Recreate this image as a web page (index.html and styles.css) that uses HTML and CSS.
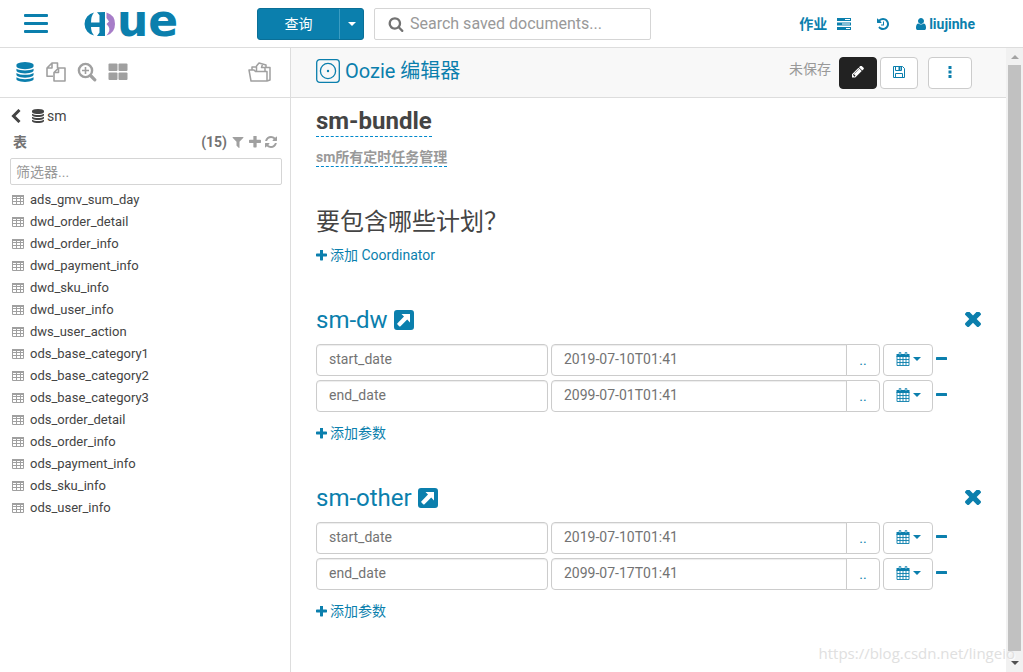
FILE: index.html
```
<!DOCTYPE html>
<html lang="zh-CN">
<head>
  <title>Hue - Oozie 编辑器</title>
  <meta charset="UTF-8">
  <meta name="viewport" content="width=device-width, initial-scale=1.0">
  <link rel="stylesheet" href="styles.css">
</head>
<body>
  <!-- icon set -->
  <svg class="icon-set" aria-hidden="true">
    <symbol id="i-database" viewBox="0 0 1792 1792"><path d="M896 768q237 0 443-43t325-127v170q0 69-103 128t-280 93.500-385 34.500-385-34.500-280-93.500-103-128v-170q119 84 325 127t443 43zm0 768q237 0 443-43t325-127v170q0 69-103 128t-280 93.500-385 34.500-385-34.500-280-93.500-103-128v-170q119 84 325 127t443 43zm0-384q237 0 443-43t325-127v170q0 69-103 128t-280 93.500-385 34.500-385-34.500-280-93.500-103-128v-170q119 84 325 127t443 43zm0-1152q208 0 385 34.500t280 93.500 103 128v128q0 69-103 128t-280 93.500-385 34.500-385-34.500-280-93.500-103-128v-128q0-69 103-128t280-93.500 385-34.500z"/></symbol>
    <symbol id="i-copy" viewBox="0 0 20 20"><path fill="none" stroke="currentColor" stroke-width="1.6" stroke-linejoin="round" d="M7 14.200H1V6l5-5h5.500v5M6 1v5H1M12.500 6H19v13H8v-8.500zM12.500 6v4.500H8"/></symbol>
    <symbol id="i-search" viewBox="0 0 1792 1792"><path d="M1216 832q0-185-131.500-316.500t-316.500-131.500-316.500 131.500-131.500 316.500 131.500 316.500 316.500 131.500 316.500-131.500 131.500-316.500zm512 832q0 52-38 90t-90 38q-54 0-90-38l-343-342q-179 124-399 124-143 0-273.500-55.500t-225-150-150-225-55.500-273.500 55.500-273.500 150-225 225-150 273.500-55.500 273.500 55.500 225 150 150 225 55.500 273.500q0 220-124 399l343 343q37 37 37 90z"/></symbol>
    <symbol id="i-zoom" viewBox="0 0 20 20"><circle cx="8.500" cy="8.500" r="6.600" fill="none" stroke="currentColor" stroke-width="2.400"/><path fill="none" stroke="currentColor" stroke-width="1.600" d="M8.500 5v7M5 8.500h7"/><path stroke="currentColor" stroke-width="3.200" stroke-linecap="round" d="M14 14l3.800 3.800"/></symbol>
    <symbol id="i-grid" viewBox="0 0 20 20"><rect x="0.500" y="1.500" width="9" height="7.500" rx="1"/><rect x="10.500" y="1.500" width="9" height="7.500" rx="1"/><rect x="0.500" y="10.500" width="9" height="7.500" rx="1"/><rect x="10.500" y="10.500" width="9" height="7.500" rx="1"/></symbol>
    <symbol id="i-folder" viewBox="0 0 24 20"><path fill="none" stroke="currentColor" stroke-width="1.500" stroke-linejoin="round" d="M1 8h5l1.500 1.500H19V19H3zM4 8V5h4.500M8.500 9.500V4L11 1l7 2v3M14.500 2.200l-1 3.300H17V9M18 5.500h4V18l-3 1"/></symbol>
    <symbol id="i-chevron" viewBox="0 0 12 14"><path fill="none" stroke="currentColor" stroke-width="3" d="M9.500 1L3.500 7l6 6"/></symbol>
    <symbol id="i-filter" viewBox="0 0 1792 1792"><path d="M1595 295q17 41-14 70l-493 493v742q0 42-39 59-13 5-25 5-27 0-45-19l-256-256q-19-19-19-45v-486l-493-493q-31-29-14-70 17-39 59-39h1280q42 0 59 39z"/></symbol>
    <symbol id="i-plus" viewBox="192 192 1408 1408"><path d="M1600 736v192q0 40-28 68t-68 28h-416v416q0 40-28 68t-68 28h-192q-40 0-68-28t-28-68v-416h-416q-40 0-68-28t-28-68v-192q0-40 28-68t68-28h416v-416q0-40 28-68t68-28h192q40 0 68 28t28 68v416h416q40 0 68 28t28 68z"/></symbol>
    <symbol id="i-refresh" viewBox="128 128 1536 1536"><path d="M1639 1056q0 5-1 7-64 268-268 434.500t-478 166.500q-146 0-282.500-55t-243.500-157l-129 129q-19 19-45 19t-45-19-19-45v-448q0-26 19-45t45-19h448q26 0 45 19t19 45-19 45l-137 137q71 66 161 102t187 36q134 0 250-65t186-179q11-17 53-117 8-23 30-23h192q13 0 22.500 9.500t9.500 22.500zm25-800v448q0 26-19 45t-45 19h-448q-26 0-45-19t-19-45 19-45l138-138q-148-137-349-137-134 0-250 65t-186 179q-11 17-53 117-8 23-30 23h-199q-13 0-22.500-9.500t-9.500-22.500v-7q65-268 270-434.500t480-166.500q146 0 284 55.500t245 156.500l130-129q19-19 45-19t45 19 19 45z"/></symbol>
    <symbol id="i-table" viewBox="0 0 12 10"><path fill="none" stroke="currentColor" d="M.5.5h11v9H.5zM0 3.500h12M0 6.500h12M4.500 0v10M8.500 0v10"/><path d="M0 0h12v2H0z"/></symbol>
    <symbol id="i-tasks" viewBox="0 0 14 12"><path fill-rule="evenodd" d="M0 0h14v3H0zM8 1v1h5V1zM0 4.500h14v3H0zM5 5.500v1h8v-1zM0 9h14v3H0zM9 10v1h4v-1z"/></symbol>
    <symbol id="i-history" viewBox="128 128 1536 1536"><path d="M1664 896q0 156-61 298t-164 245-245 164-298 61q-172 0-327-72.500t-264-204.500q-7-10-6.500-22.500t8.500-20.500l137-138q10-9 25-9 16 2 23 12 73 95 179 147t225 52q104 0 198.500-40.500t163.500-109.500 109.500-163.500 40.500-198.500-40.500-198.500-109.500-163.500-163.500-109.500-198.500-40.500q-98 0-188 35.500t-160 101.500l137 138q31 30 14 69-17 40-59 40h-448q-26 0-45-19t-19-45v-448q0-42 40-59 39-17 69 14l130 129q107-101 244.500-156.500t284.500-55.500q156 0 298 61t245 164 164 245 61 298zm-640-288v448q0 14-9 23t-23 9h-320q-14 0-23-9t-9-23v-64q0-14 9-23t23-9h224v-352q0-14 9-23t23-9h64q14 0 23 9t9 23z"/></symbol>
    <symbol id="i-user" viewBox="192 128 1408 1536"><path d="M1536 1399q0 109-62.500 187t-150.500 78h-854q-88 0-150.500-78t-62.500-187q0-85 8.500-160.500t31.500-152 58.500-131 94-89 134.500-34.500q131 128 313 128t313-128q76 0 134.500 34.500t94 89 58.500 131 31.500 152 8.500 160.500zm-256-887q0 159-112.500 271.500t-271.500 112.500-271.500-112.500-112.500-271.500 112.500-271.500 271.500-112.500 271.500 112.500 112.500 271.500z"/></symbol>
    <symbol id="i-oozie" viewBox="0 0 24 24"><g fill="none" stroke="currentColor" stroke-width="1.300"><rect x="0.700" y="0.700" width="22.600" height="22.600" rx="3"/><circle cx="12" cy="12" r="7.600"/></g><circle cx="12" cy="12" r="1.200"/></symbol>
    <symbol id="i-pencil" viewBox="128 256 1536 1408"><path d="M491 1536l91-91-235-235-91 91v107h128v128h107zm523-928q0-22-22-22-10 0-17 7l-542 542q-7 7-7 17 0 22 22 22 10 0 17-7l542-542q7-7 7-17zm-54-192l416 416-832 832h-416v-416zm683 96q0 53-37 90l-166 166-416-416 166-165q36-38 90-38 53 0 91 38l235 234q37 39 37 91z"/></symbol>
    <symbol id="i-save" viewBox="0 0 12 12"><path fill="none" stroke="currentColor" d="M.5.5h9l2 2v9H.5zM2.500 11.500v-4h7v4M2.500.5v4h6v-4"/><path d="M5.500 1h2v3h-2z"/></symbol>
    <symbol id="i-dots" viewBox="0 0 4 12"><path d="M.5 0h3v3h-3zM.5 4.500h3v3h-3zM.5 9h3v3h-3z"/></symbol>
    <symbol id="i-open" viewBox="0 0 20 20"><path fill-rule="evenodd" d="M3 0h14a3 3 0 0 1 3 3v14a3 3 0 0 1-3 3H3a3 3 0 0 1-3-3V3a3 3 0 0 1 3-3zM7.500 4l2.500 2.500-6.500 6.700q-.7.600 0 1.300l1.700 1.700q.6.700 1.300 0l6.700-6.600 2.800 2.900V4z"/></symbol>
    <symbol id="i-times" viewBox="302 444 1188 1188"><path transform="translate(0 109)" d="M1490 1223q0 40-28 68l-136 136q-28 28-68 28t-68-28l-294-294-294 294q-28 28-68 28t-68-28l-136-136q-28-28-28-68t28-68l294-294-294-294q-28-28-28-68t28-68l136-136q28-28 68-28t68 28l294 294 294-294q28-28 68-28t68 28l136 136q28 28 28 68t-28 68l-294 294 294 294q28 28 28 68z"/></symbol>
    <symbol id="i-calendar" viewBox="0 0 13 14"><path fill="none" stroke="currentColor" stroke-width=".9" d="M.5 4v9.500h12V4M.5 7.500h12M.5 10.500h12M3.500 4v9.500M6.500 4v9.500M9.500 4v9.500"/><path d="M0 2h13v3H0z"/><path fill="#fff" stroke="currentColor" stroke-width=".8" d="M2.700.5h1.600V3H2.700zM8.700.5h1.600V3H8.700z"/></symbol>
    <symbol id="i-minus" viewBox="0 0 11 3"><rect width="11" height="3" rx=".5"/></symbol>
    <symbol id="i-caret" viewBox="0 0 8 4"><path d="M0 0h8L4 4z"/></symbol>
  </svg>

  <header class="navbar">
    <button type="button" class="hamburger" aria-label="菜单"><span></span><span></span><span></span></button>
    <a href="#" class="logo" aria-label="Hue">
      <svg width="33" height="24" viewBox="0 0 33 24">
        <path fill="#0b7fad" d="M10 .6A11.600 11.600 0 0 0 10 23.400Q7 20 7 15H15.500v5.500L13 24h8V0l-8 .3 2.500 3V10.500H7Q7 4 10 .6z"/>
        <path fill="#a77dc8" d="M22.500.5Q31 3 31 12t-8.500 11.500Q27 18 24.500 14.500L22.500 12l2.500-2.500-2.500-3.500z"/>
      </svg>
      <span class="logo-text">ue</span>
    </a>
    <div class="query">
      <button type="button" class="query-main">查询</button>
      <button type="button" class="query-toggle" aria-label="更多"><svg class="caret"><use href="#i-caret"/></svg></button>
    </div>
    <div class="search">
      <svg class="icon-16"><use href="#i-search"/></svg>
      <input type="search" placeholder="Search saved documents..." aria-label="Search saved documents">
    </div>
    <nav class="nav-links">
      <a href="#">作业 <svg class="tasks"><use href="#i-tasks"/></svg></a>
      <a href="#" aria-label="历史"><svg class="icon-12"><use href="#i-history"/></svg></a>
      <a href="#"><svg class="icon-12"><use href="#i-user"/></svg>liujinhe</a>
    </nav>
  </header>

  <div class="page">
    <aside class="sidebar">
      <div class="assist-bar">
        <button type="button" class="active" aria-label="SQL"><svg class="icon-20"><use href="#i-database"/></svg></button>
        <button type="button" aria-label="文档"><svg class="icon-20"><use href="#i-copy"/></svg></button>
        <button type="button" aria-label="搜索"><svg class="icon-20"><use href="#i-zoom"/></svg></button>
        <button type="button" aria-label="应用"><svg class="icon-20"><use href="#i-grid"/></svg></button>
        <button type="button" class="folder" aria-label="文件"><svg class="icon-24"><use href="#i-folder"/></svg></button>
      </div>
      <div class="assist">
        <a href="#" class="breadcrumb"><svg class="chevron"><use href="#i-chevron"/></svg><svg class="icon-14"><use href="#i-database"/></svg>sm</a>
        <div class="assist-header">
          <h4>表</h4>
          <span>(15)</span>
          <button type="button" aria-label="筛选"><svg class="icon-14"><use href="#i-filter"/></svg></button>
          <button type="button" aria-label="新建"><svg class="icon-12"><use href="#i-plus"/></svg></button>
          <button type="button" aria-label="刷新"><svg class="icon-12"><use href="#i-refresh"/></svg></button>
        </div>
        <input type="text" class="filter" placeholder="筛选器..." aria-label="筛选器">
        <ul class="tables">
          <li><a href="#"><svg><use href="#i-table"/></svg>ads_gmv_sum_day</a></li>
          <li><a href="#"><svg><use href="#i-table"/></svg>dwd_order_detail</a></li>
          <li><a href="#"><svg><use href="#i-table"/></svg>dwd_order_info</a></li>
          <li><a href="#"><svg><use href="#i-table"/></svg>dwd_payment_info</a></li>
          <li><a href="#"><svg><use href="#i-table"/></svg>dwd_sku_info</a></li>
          <li><a href="#"><svg><use href="#i-table"/></svg>dwd_user_info</a></li>
          <li><a href="#"><svg><use href="#i-table"/></svg>dws_user_action</a></li>
          <li><a href="#"><svg><use href="#i-table"/></svg>ods_base_category1</a></li>
          <li><a href="#"><svg><use href="#i-table"/></svg>ods_base_category2</a></li>
          <li><a href="#"><svg><use href="#i-table"/></svg>ods_base_category3</a></li>
          <li><a href="#"><svg><use href="#i-table"/></svg>ods_order_detail</a></li>
          <li><a href="#"><svg><use href="#i-table"/></svg>ods_order_info</a></li>
          <li><a href="#"><svg><use href="#i-table"/></svg>ods_payment_info</a></li>
          <li><a href="#"><svg><use href="#i-table"/></svg>ods_sku_info</a></li>
          <li><a href="#"><svg><use href="#i-table"/></svg>ods_user_info</a></li>
        </ul>
      </div>
    </aside>

    <main class="editor">
      <div class="editor-bar">
        <a href="#" class="app-name"><svg class="icon-24"><use href="#i-oozie"/></svg>Oozie 编辑器</a>
        <span class="unsaved">未保存</span>
        <button type="button" class="btn btn-dark" aria-label="编辑"><svg class="icon-12"><use href="#i-pencil"/></svg></button>
        <button type="button" class="btn" aria-label="保存"><svg class="icon-12"><use href="#i-save"/></svg></button>
        <button type="button" class="btn btn-more" aria-label="更多操作"><svg class="dots"><use href="#i-dots"/></svg></button>
      </div>

      <div class="content">
        <h1><span class="editable">sm-bundle</span></h1>
        <p class="description"><span class="editable">sm所有定时任务管理</span></p>

        <h2>要包含哪些计划？</h2>
        <a href="#" class="add"><svg><use href="#i-plus"/></svg>添加 Coordinator</a>

        <section class="coordinator">
          <div class="coordinator-title">
            <h3>sm-dw</h3>
            <a href="#" aria-label="打开 sm-dw"><svg class="icon-20"><use href="#i-open"/></svg></a>
            <button type="button" class="remove" aria-label="移除"><svg class="icon-16"><use href="#i-times"/></svg></button>
          </div>
          <div class="param">
            <input type="text" class="param-name" value="start_date" aria-label="参数名">
            <div class="param-value">
              <input type="text" value="2019-07-10T01:41" aria-label="start_date">
              <button type="button">..</button>
            </div>
            <button type="button" class="calendar" aria-label="日期"><svg class="icon-14"><use href="#i-calendar"/></svg><svg class="caret"><use href="#i-caret"/></svg></button>
            <button type="button" class="minus" aria-label="删除"><svg><use href="#i-minus"/></svg></button>
          </div>
          <div class="param">
            <input type="text" class="param-name" value="end_date" aria-label="参数名">
            <div class="param-value">
              <input type="text" value="2099-07-01T01:41" aria-label="end_date">
              <button type="button">..</button>
            </div>
            <button type="button" class="calendar" aria-label="日期"><svg class="icon-14"><use href="#i-calendar"/></svg><svg class="caret"><use href="#i-caret"/></svg></button>
            <button type="button" class="minus" aria-label="删除"><svg><use href="#i-minus"/></svg></button>
          </div>
          <a href="#" class="add"><svg><use href="#i-plus"/></svg>添加参数</a>
        </section>

        <section class="coordinator">
          <div class="coordinator-title">
            <h3>sm-other</h3>
            <a href="#" aria-label="打开 sm-other"><svg class="icon-20"><use href="#i-open"/></svg></a>
            <button type="button" class="remove" aria-label="移除"><svg class="icon-16"><use href="#i-times"/></svg></button>
          </div>
          <div class="param">
            <input type="text" class="param-name" value="start_date" aria-label="参数名">
            <div class="param-value">
              <input type="text" value="2019-07-10T01:41" aria-label="start_date">
              <button type="button">..</button>
            </div>
            <button type="button" class="calendar" aria-label="日期"><svg class="icon-14"><use href="#i-calendar"/></svg><svg class="caret"><use href="#i-caret"/></svg></button>
            <button type="button" class="minus" aria-label="删除"><svg><use href="#i-minus"/></svg></button>
          </div>
          <div class="param">
            <input type="text" class="param-name" value="end_date" aria-label="参数名">
            <div class="param-value">
              <input type="text" value="2099-07-17T01:41" aria-label="end_date">
              <button type="button">..</button>
            </div>
            <button type="button" class="calendar" aria-label="日期"><svg class="icon-14"><use href="#i-calendar"/></svg><svg class="caret"><use href="#i-caret"/></svg></button>
            <button type="button" class="minus" aria-label="删除"><svg><use href="#i-minus"/></svg></button>
          </div>
          <a href="#" class="add"><svg><use href="#i-plus"/></svg>添加参数</a>
        </section>
      </div>
    </main>

    <div class="scrollbar" aria-hidden="true">
      <svg class="caret up"><use href="#i-caret"/></svg>
      <div class="thumb"></div>
      <svg class="caret"><use href="#i-caret"/></svg>
    </div>
  </div>

  <div class="watermark">https://blog.csdn.net/lingeio</div>
</body>
</html>
```
FILE: styles.css
```
/* Reset styles */
* {
  margin: 0;
  padding: 0;
  box-sizing: border-box;
}

/* Base styles */
body {
  display: flex;
  flex-direction: column;
  height: 100vh;
  overflow: hidden;
  font-family: Roboto, "Noto Sans CJK SC", sans-serif;
  font-size: 14px;
  line-height: 20px;
  color: #444;
  background-color: #fff;
}

a {
  color: #0b7fad;
  text-decoration: none;
}

button {
  display: flex;
  align-items: center;
  justify-content: center;
  border: none;
  background: none;
  color: #0b7fad;
  font: inherit;
  cursor: pointer;
}

input {
  min-width: 0;
  border: 1px solid #ccc;
  background-color: #fff;
  color: #737373;
  font: inherit;
}

input::placeholder {
  color: #999;
  opacity: 1;
}

ul {
  list-style: none;
}

svg {
  flex: none;
  fill: currentColor;
}

.icon-set {
  display: none;
}

.icon-12 {
  width: 12px;
  height: 12px;
}

.icon-14 {
  width: 14px;
  height: 14px;
}

.icon-16 {
  width: 16px;
  height: 16px;
}

.icon-20 {
  width: 20px;
  height: 20px;
}

.icon-24 {
  width: 24px;
  height: 24px;
}

.caret {
  width: 8px;
  height: 4px;
}

/* Top bar */
.navbar {
  display: flex;
  align-items: center;
  flex: none;
  height: 48px;
  padding-left: 24px;
  padding-right: 48px;
  border-bottom: 1px solid #ddd;
}

.hamburger {
  flex-direction: column;
  gap: 5px;
}

.hamburger span {
  width: 24px;
  height: 3px;
  border-radius: 1px;
  background-color: #0b7fad;
}

.logo {
  display: flex;
  align-items: center;
  width: 173px;
  padding-left: 36px;
}

.logo-text {
  padding-bottom: 6px;
  font: bold 44px/52px "DejaVu Sans", sans-serif;
}

.query {
  display: flex;
  height: 32px;
  margin-left: 36px;
  border: 1px solid #0a6f97;
  border-radius: 3px;
  background-color: #0b7fad;
}

.query button {
  color: #fff;
}

.query-main {
  width: 81px;
}

.query .query-toggle {
  width: 24px;
  border-left: 1px solid #3b9cc2;
}

.search {
  display: flex;
  align-items: center;
  gap: 6px;
  width: 277px;
  height: 32px;
  margin-left: 10px;
  padding-left: 13px;
  border: 1px solid #d5d5d5;
  border-radius: 2px;
  color: #737373;
}

.search input {
  flex: 1;
  border: none;
  font-size: 16px;
  outline: none;
}

.nav-links {
  display: flex;
  gap: 26px;
  margin-left: auto;
}

.nav-links a {
  display: flex;
  align-items: center;
  gap: 2px;
  font-weight: bold;
}

.nav-links .tasks {
  width: 14px;
  height: 12px;
  margin-left: 8px;
}

/* Layout */
.page {
  display: flex;
  flex: 1;
  min-height: 0;
}

/* Left assist */
.sidebar {
  flex: none;
  width: 291px;
  border-right: 1px solid #ddd;
}

.assist-bar {
  display: flex;
  align-items: center;
  gap: 11px;
  height: 50px;
  padding: 0 18px 2px 15px;
  border-bottom: 1px solid #ddd;
}

.assist-bar button {
  color: #a0a0a0;
}

.assist-bar .active {
  color: #0b7fad;
}

.assist-bar .folder {
  margin-left: auto;
}

.assist {
  padding: 8px 8px 0 10px;
}

.breadcrumb {
  display: flex;
  align-items: center;
  gap: 2px;
  color: #444;
}

.chevron {
  width: 12px;
  height: 14px;
  margin-right: 7px;
}

.assist-header {
  display: flex;
  align-items: center;
  gap: 4px;
  height: 32px;
  padding: 0 5px 0 3px;
  color: #737373;
  font-weight: bold;
}

.assist-header h4 {
  margin-right: auto;
}

.assist-header button {
  color: #a0a0a0;
}

.filter {
  display: block;
  width: 100%;
  height: 27px;
  padding: 0 5px;
  border-color: #d5d5d5;
  border-radius: 2px;
}

.tables {
  margin-top: 4px;
}

.tables a {
  display: flex;
  align-items: center;
  gap: 6px;
  height: 22px;
  padding-left: 2px;
  color: #444;
  font-size: 13px;
}

.tables svg {
  width: 12px;
  height: 10px;
  color: #a0a0a0;
}

/* Editor */
.editor {
  flex: 1;
  min-width: 0;
}

.editor-bar {
  display: flex;
  align-items: center;
  height: 50px;
  padding: 0 34px 0 25px;
  border-bottom: 1px solid #ddd;
  background-color: #f8f8f8;
}

.app-name {
  display: flex;
  align-items: center;
  gap: 5px;
  margin-right: auto;
  padding-bottom: 4px;
  font-size: 20px;
}

.unsaved {
  margin-right: 8px;
  padding-bottom: 8px;
  color: #999;
}

.btn {
  width: 38px;
  height: 32px;
  margin-right: 3px;
  padding-bottom: 2px;
  border: 1px solid #ccc;
  border-radius: 4px;
  background-color: #fff;
}

.btn-dark {
  border-color: #222;
  background-color: #222;
  color: #fff;
}

.btn-more {
  width: 44px;
  margin-left: 7px;
  margin-right: 0;
}

.dots {
  width: 4px;
  height: 12px;
}

.content {
  padding: 8px 25px 0;
}

.content h1 {
  display: flex;
  font-size: 24px;
  line-height: 30px;
}

.editable {
  border-bottom: 1px dashed #0088cc;
}

.description {
  display: flex;
  margin-top: 11px;
  color: #999;
  font-weight: bold;
  line-height: 18px;
}

.content h2 {
  margin-top: 35px;
  margin-bottom: 3px;
  font-size: 24px;
  font-weight: 400;
  line-height: 40px;
}

.add {
  display: flex;
  align-items: center;
  gap: 3px;
}

.add svg {
  width: 11px;
  height: 11px;
}

.coordinator {
  margin-top: 35px;
}

.coordinator-title {
  display: flex;
  align-items: center;
  gap: 6px;
  height: 40px;
  margin-bottom: 4px;
}

.coordinator-title a {
  display: flex;
}

.coordinator-title h3 {
  color: #0b7fad;
  font-size: 24px;
  font-weight: 400;
}

.remove {
  margin-left: auto;
}

.param {
  display: flex;
  align-items: center;
  gap: 3px;
  margin-bottom: 4px;
}

.param input {
  height: 32px;
  padding: 0 12px 2px;
  border-radius: 4px;
  box-shadow: inset 0 1px 1px rgba(0, 0, 0, 0.075);
}

.param-name {
  width: 232px;
}

.param-value {
  display: flex;
  width: 329px;
}

.param-value input {
  flex: 1;
  border-radius: 4px 0 0 4px;
}

.param-value button {
  width: 34px;
  margin-left: -1px;
  border: 1px solid #ccc;
  border-radius: 0 4px 4px 0;
}

.calendar {
  gap: 3px;
  width: 50px;
  height: 32px;
  padding-bottom: 2px;
  border: 1px solid #ccc;
  border-radius: 4px;
}

.minus {
  padding-bottom: 4px;
}

.minus svg {
  width: 11px;
  height: 3px;
}

.coordinator .add {
  margin-top: 11px;
}

/* Scroll bar */
.scrollbar {
  display: flex;
  flex-direction: column;
  align-items: center;
  flex: none;
  width: 17px;
  padding: 7px 0;
  background-color: #f1f1f1;
  color: #505050;
}

.scrollbar .up {
  color: #a3a3a3;
  transform: rotate(180deg);
}

.thumb {
  flex: 1;
  width: 13px;
  margin: 6px 0 10px;
  background-color: #c1c1c1;
}

.watermark {
  position: absolute;
  right: 8px;
  bottom: 9px;
  color: #e0e0e0;
  font-family: "Open Sans", sans-serif;
  font-size: 15px;
  text-shadow: 1px 1px 1px #fff;
}
```
